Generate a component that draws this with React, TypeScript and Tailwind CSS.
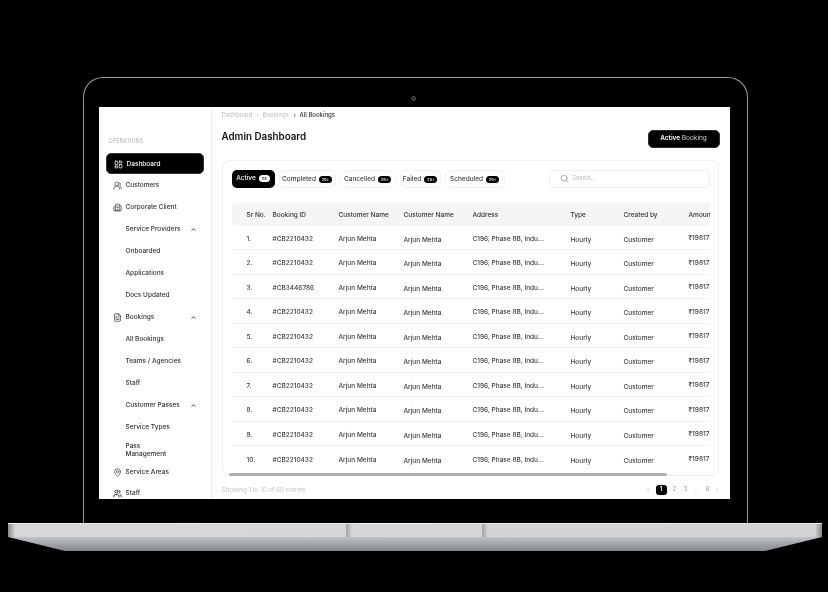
import React from 'react';
import { Building2, ChevronLeft, ChevronRight, ChevronUp, FileText, LayoutDashboard, MapPin, Search, Users, UsersRound } from 'lucide-react';

const navItems = [
  { label: 'Customers', icon: UsersRound },
  { label: 'Corporate Client', icon: Building2 },
  { label: 'Service Providers', arrow: true },
  { label: 'Onboarded' },
  { label: 'Applications' },
  { label: 'Docs Updated' },
  { label: 'Bookings', icon: FileText, arrow: true },
  { label: 'All Bookings' },
  { label: 'Teams / Agencies' },
  { label: 'Staff' },
  { label: 'Customer Passes', arrow: true },
  { label: 'Service Types' },
];

const tabs = [
  { label: 'Completed', width: 'w-[57px]' },
  { label: 'Cancelled', width: 'w-[56px]' },
  { label: 'Failed', width: 'w-[41px]' },
  { label: 'Scheduled', width: 'w-[60px]' },
];

const rows = [1, 2, 3, 4, 5, 6, 7, 8, 9, 10];
const colClass = 'grid grid-cols-[26px_66px_65px_69px_98px_53px_65px_1fr]';

const Sidebar = () => (
  <aside className="w-[113px] shrink-0 border-r border-[#eeeeee] pl-[7px] pr-[7px] pt-[30px] overflow-hidden">
    <div className="pl-[3px] text-[5.5px] leading-[8px] text-[#b4b4b4]">OPERATIONS</div>
    <div className="mt-[8px] h-[21px] rounded-[5px] bg-black border border-[#333] flex items-center pt-[2px] pl-[7px] text-white font-medium">
      <span className="w-[13px] shrink-0">
        <LayoutDashboard className="w-[9px] h-[9px]" strokeWidth={2} />
      </span>
      <span>Dashboard</span>
    </div>
    <div className="mt-[1px]">
      {navItems.map(item => (
        <div key={item.label} className="h-[22px] flex items-center pl-[7px] text-[#333] font-medium">
          <span className="w-[13px] shrink-0">
            {item.icon && <item.icon className="w-[9px] h-[9px] text-[#444]" strokeWidth={2} />}
          </span>
          <span>{item.label}</span>
          {item.arrow && <ChevronUp className="absolute left-[91px] w-[7px] h-[7px] text-[#333]" strokeWidth={3} />}
        </div>
      ))}
      <div className="h-[22px] flex items-center pl-[20px] leading-[8px] text-[#333] font-medium">
        Pass<br />Management
      </div>
      <div className="h-[22px] flex items-center pt-[2px] pl-[7px] text-[#333] font-medium">
        <span className="w-[13px] shrink-0">
          <MapPin className="w-[9px] h-[9px] text-[#444]" strokeWidth={2} />
        </span>
        Service Areas
      </div>
      <div className="h-[21px] flex items-center pl-[7px] text-[#333] font-medium">
        <span className="w-[13px] shrink-0">
          <Users className="w-[9px] h-[9px] text-[#333]" strokeWidth={2.5} />
        </span>
        Staff
      </div>
    </div>
  </aside>
);

const BookingsTable = () => (
  <div className="mt-[15px] overflow-hidden">
    <div className="w-[520px]">
      <div className={`${colClass} h-[23px] items-center bg-[#f5f5f5] rounded-[4px] font-medium text-[#333] pl-[15px] pt-[2px]`}>
        <span>Sr No.</span>
        <span>Booking ID</span>
        <span>Customer Name</span>
        <span>Customer Name</span>
        <span>Address</span>
        <span>Type</span>
        <span>Created by</span>
        <span>Amount</span>
      </div>
      {rows.map(n => (
        <div key={n} className={`${colClass} h-[24.5px] items-center border-b border-[#f0f0f0] last:border-b-0 text-[#3c3c3c] font-medium pl-[15px] pt-[4px]`}>
          <span>{n}.</span>
          <span>{n === 3 ? '#CB3446786' : '#CB2210432'}</span>
          <span>Arjun Mehta</span>
          <span className="pt-[2px]">Arjun Mehta</span>
          <span>C196, Phase 8B, Indu...</span>
          <span className="pt-[2px]">Hourly</span>
          <span className="pt-[2px]">Customer</span>
          <span className="pb-[1px]">₹19817</span>
        </div>
      ))}
    </div>
  </div>
);

const Pagination = () => (
  <div className="flex items-center gap-[5px] text-[#a0a0a0]">
    <ChevronLeft className="w-[6px] h-[6px]" />
    <span className="w-[11px] h-[10px] rounded-[3px] bg-black text-white flex items-center justify-center font-semibold">1</span>
    <span className="w-[6px] text-center">2</span>
    <span className="w-[6px] text-center">3</span>
    <span className="w-[6px] text-center">..</span>
    <span className="w-[6px] text-center">6</span>
    <ChevronRight className="-ml-[2px] w-[6px] h-[6px]" />
  </div>
);

const Dashboard = () => (
  <div className="w-[631px] h-[392px] bg-white flex overflow-hidden text-[6.5px] leading-[9px] blur-[0.35px] relative font-['Inter',sans-serif]">
    <Sidebar />
    <main className="flex-1 min-w-0 pl-[10px] pr-[10px]">
      <div className="h-[16px] flex items-center text-[#bbbbbb] text-[6px]">
        <span className="w-[35px]">Dashboard</span>
        <span className="w-[6px]">›</span>
        <span className="w-[31px]">Bookings</span>
        <span className="w-[6px] text-[#333]">›</span>
        <span className="text-[#333] font-medium">All Bookings</span>
      </div>
      <div className="mt-[7px] h-[18px] flex items-start justify-between">
        <h1 className="text-[9.8px] leading-[14px] font-semibold text-[#111]">Admin Dashboard</h1>
        <button className="w-[72px] h-[18px] rounded-[5px] bg-black border border-[#2c2c2c] text-white font-semibold">
          Active <span className="font-normal text-[#cccccc]">Booking</span>
        </button>
      </div>
      <section className="mt-[12px] mr-[1px] h-[316px] rounded-[7px] border border-[#efefef] pt-[9px] pl-[9px] pr-[8px] relative">
        <div className="flex items-center justify-between">
          <div className="flex items-center gap-[4px]">
            <div className="h-[18px] w-[43px] rounded-[5px] bg-black text-white flex items-center justify-center gap-[3px] font-medium">
              Active
              <span className="w-[11px] h-[7px] rounded-full bg-white text-black text-[4px] leading-[7px] text-center">28</span>
            </div>
            {tabs.map(t => (
              <div key={t.label} className={`${t.width} h-[18px] rounded-[5px] border border-[#f3f3f3] flex items-center justify-center gap-[3px] pt-[2px] text-[#3c3c3c] font-medium`}>
                {t.label}
                <span className="w-[13px] h-[7px] rounded-full bg-black text-white text-[4px] leading-[7px] text-center">28+</span>
              </div>
            ))}
          </div>
          <div className="w-[161px] h-[18px] rounded-[5px] border border-[#f0f0f0] flex items-center gap-[4px] pl-[10px] text-[#bbbbbb]">
            <Search className="w-[9px] h-[9px] text-[#777]" strokeWidth={1.5} />
            <span className="text-[5.5px]">Search...</span>
          </div>
        </div>
        <BookingsTable />
        <div className="absolute left-[6px] bottom-[-1px] w-[438px] h-[3px] rounded-full bg-[#b0b0b0]" />
      </section>
      <div className="mt-[9px] flex items-center justify-between">
        <span className="text-[#c4c4c4] text-[6.2px]">Showing 1 to 10 of 60 entries</span>
        <Pagination />
      </div>
    </main>
  </div>
);

export default function App() {
  return (
    <div className="w-[828px] h-[592px] bg-black overflow-hidden pt-[77px]">
      <div className="relative ml-[83px] w-[665px] h-[446px] rounded-t-[20px] border-[1.5px] border-b-0 border-[#9a9a9a] pl-[14.5px] pt-[28.5px]">
        <div className="absolute left-[327px] top-[17.5px] w-[5px] h-[5px] rounded-full bg-[#26262c] border border-[#55555c]" />
        <Dashboard />
      </div>
      <div className="relative ml-[8px] w-[814px] h-[28px] [clip-path:polygon(0_0,100%_0,100%_50%,93%_100%,7%_100%,0_50%)]">
        <div className="h-[14px] flex bg-gradient-to-r from-[#d8d8d8] to-[#d2d2d2] border-t border-[#efefef]">
          <div className="w-[8px] bg-gradient-to-r from-[#8a8a8a] to-[#dddddd]" />
          <div className="ml-[330px] w-[6px] bg-gradient-to-r from-[#a0a0a0] to-[#d6d6d6]" />
          <div className="ml-[130px] w-[6px] bg-gradient-to-r from-[#a0a0a0] to-[#d6d6d6]" />
          <div className="ml-auto w-[8px] bg-gradient-to-r from-[#dddddd] to-[#8a8a8a]" />
        </div>
        <div className="h-[14px] bg-gradient-to-b from-[#c2c3c6] to-[#85878e]" />
      </div>
    </div>
  );
}
